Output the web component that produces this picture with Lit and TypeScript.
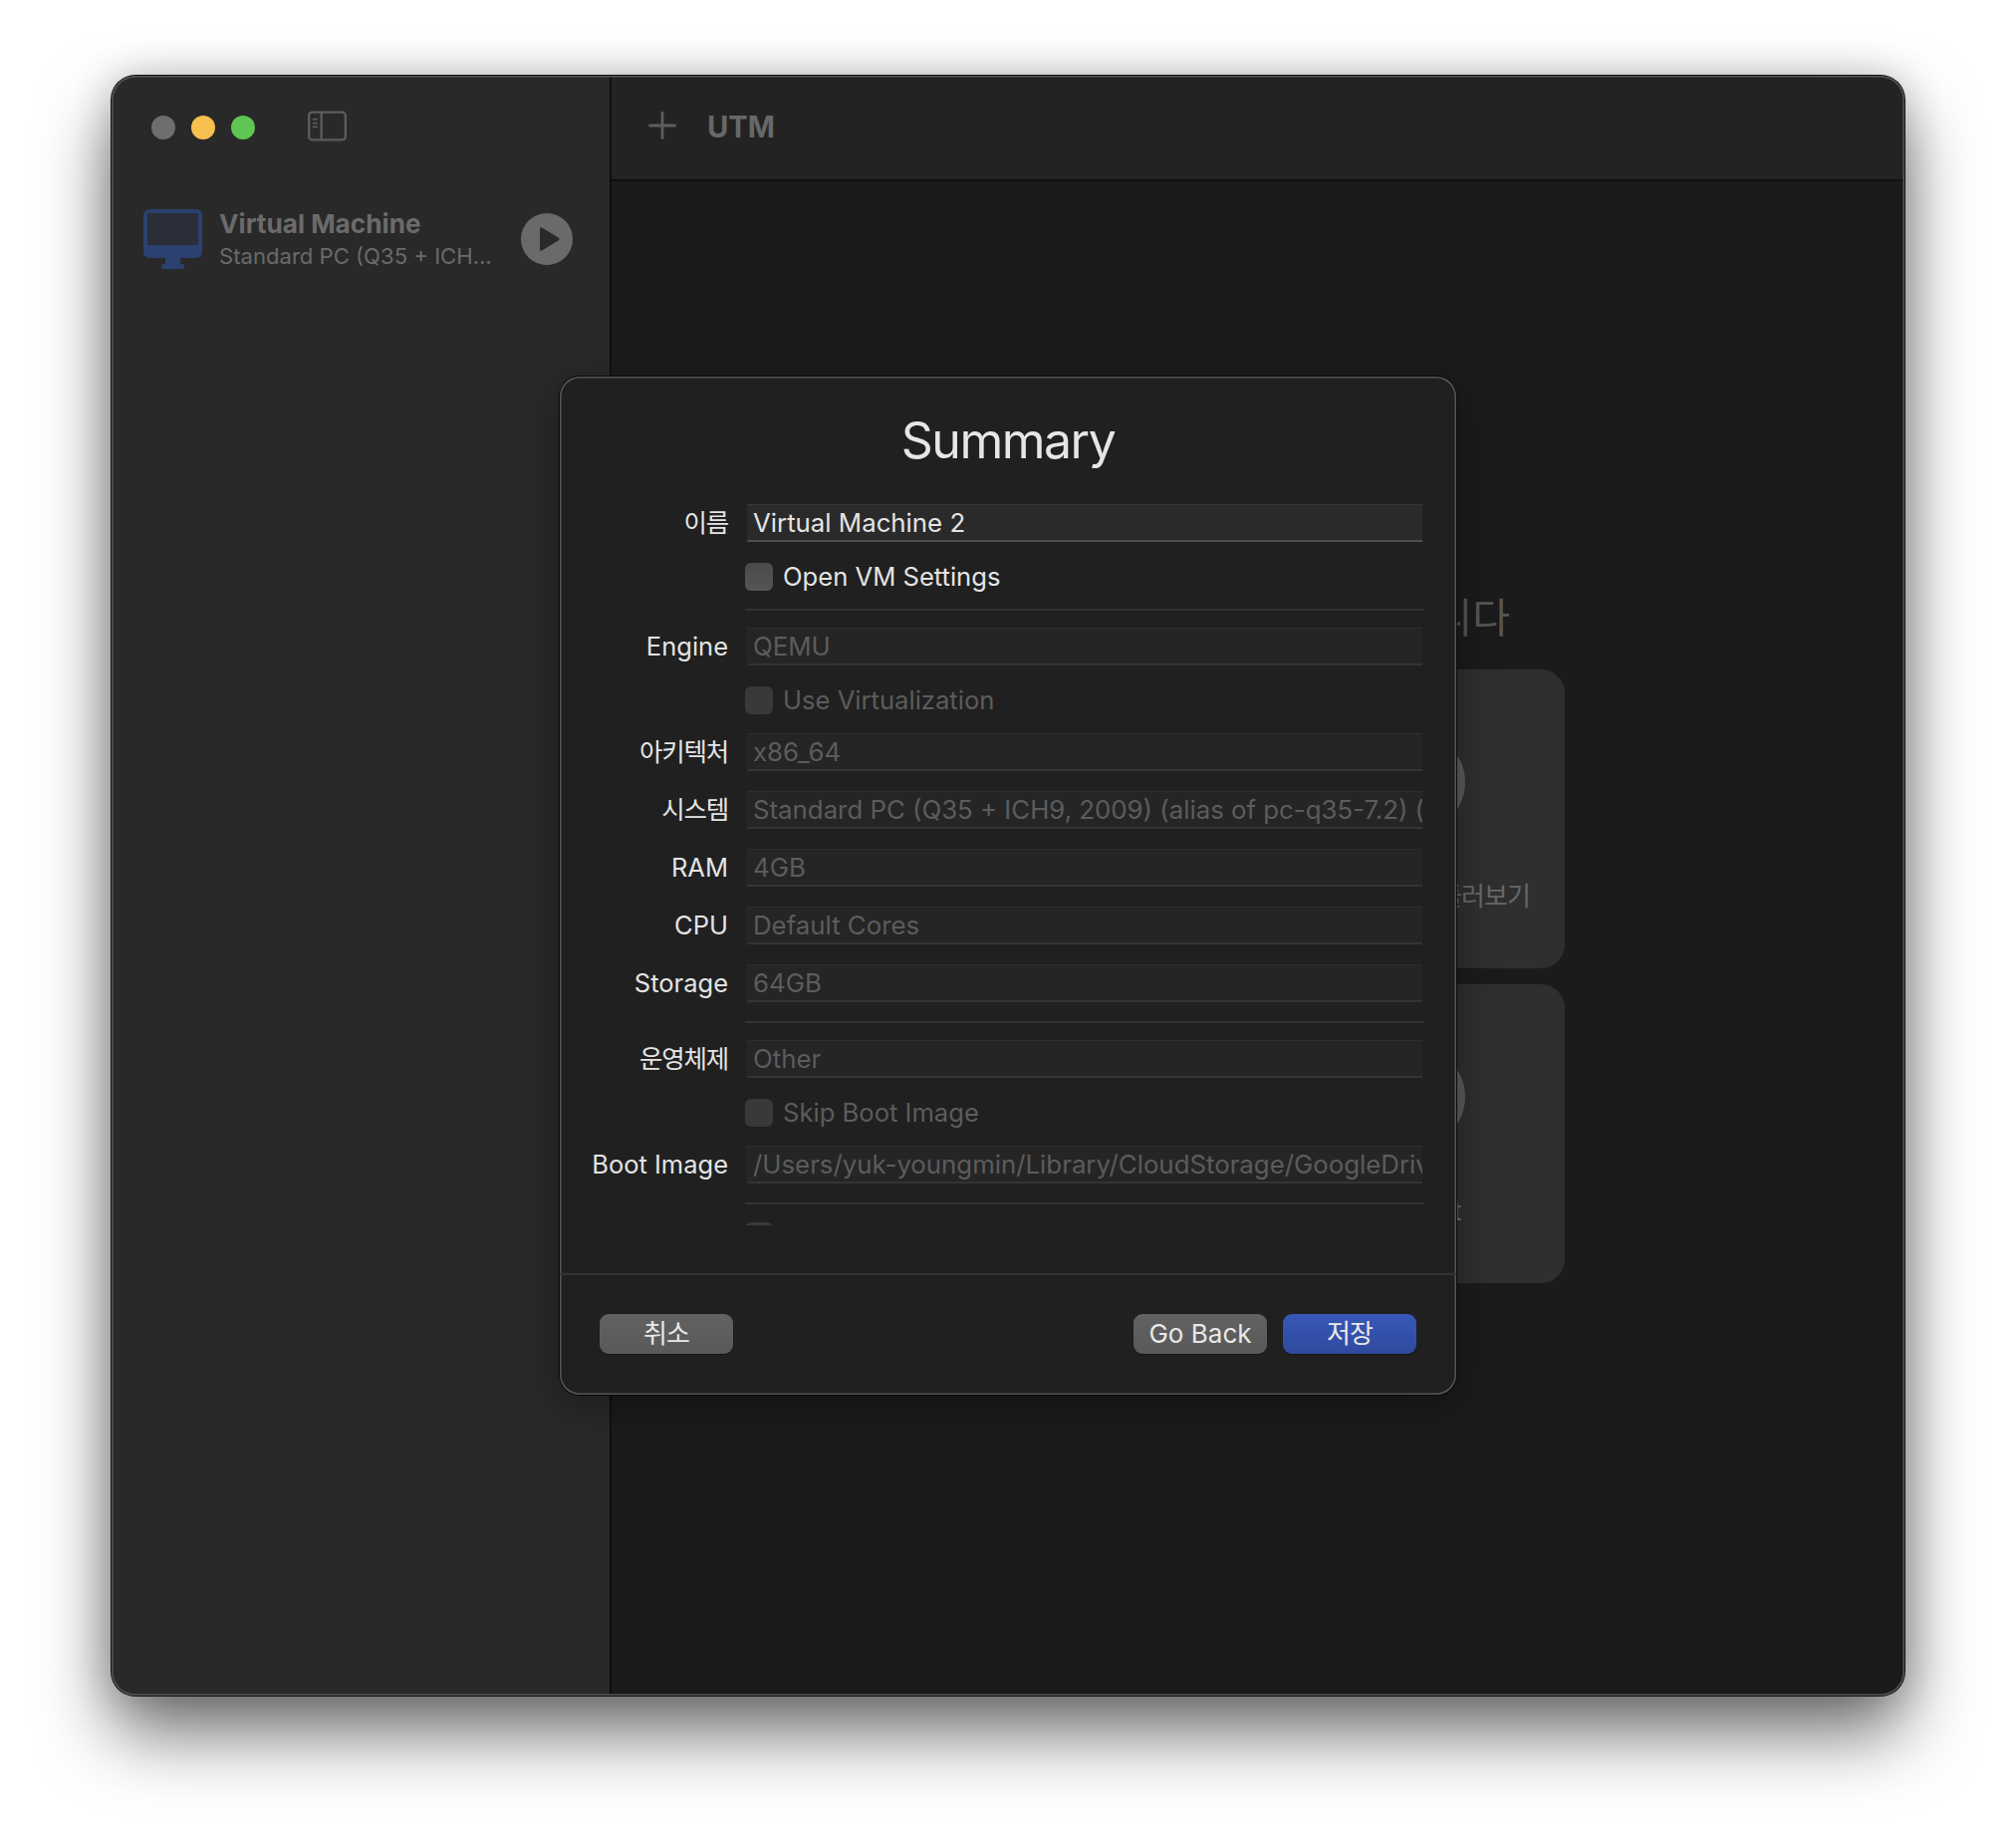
import { LitElement, html, css } from "lit";
import { customElement } from "lit/decorators.js";

type Row =
  | { kind: "field"; label: string; value: string; active?: boolean; ko?: boolean }
  | { kind: "check"; label: string; active?: boolean }
  | { kind: "divider" };

const rows: Row[] = [
  { kind: "field", label: "이름", value: "Virtual Machine 2", active: true, ko: true },
  { kind: "check", label: "Open VM Settings", active: true },
  { kind: "divider" },
  { kind: "field", label: "Engine", value: "QEMU" },
  { kind: "check", label: "Use Virtualization" },
  { kind: "field", label: "아키텍처", value: "x86_64", ko: true },
  { kind: "field", label: "시스템", value: "Standard PC (Q35 + ICH9, 2009) (alias of pc-q35-7.2) (q35)", ko: true },
  { kind: "field", label: "RAM", value: "4GB" },
  { kind: "field", label: "CPU", value: "Default Cores" },
  { kind: "field", label: "Storage", value: "64GB" },
  { kind: "divider" },
  { kind: "field", label: "운영체제", value: "Other", ko: true },
  { kind: "check", label: "Skip Boot Image" },
  { kind: "field", label: "Boot Image", value: "/Users/yuk-youngmin/Library/CloudStorage/GoogleDrive-account/My Drive/image.iso" },
  { kind: "divider" },
  { kind: "check", label: "" },
];

@customElement("app-root")
export class AppRoot extends LitElement {
  static styles = css`
    :host {
      display: block;
      width: 2024px;
      height: 1850px;
      padding: 76px 112px 148px;
      box-sizing: border-box;
      background: #fff;
      font-family: Inter, "Noto Sans CJK KR", sans-serif;
      overflow: hidden;
    }
    .window {
      position: relative;
      display: flex;
      height: 100%;
      border-radius: 24px;
      background: #1b1b1b;
      box-shadow: 0 0 0 1px #111, 0 38px 72px rgba(0, 0, 0, 0.56), 0 0 40px rgba(0, 0, 0, 0.2);
    }
    .window::after {
      content: "";
      position: absolute;
      inset: 0;
      border-radius: 24px;
      box-shadow: inset 0 0 0 1.5px #555;
      pointer-events: none;
    }
    .sidebar {
      flex: 0 0 502px;
      background: #292929;
      border-right: 2px solid #0f0f0f;
      border-radius: 24px 0 0 24px;
      box-sizing: border-box;
    }
    .titlebar {
      display: flex;
      align-items: center;
      height: 79px;
      padding: 25px 0 0 40px;
      box-sizing: border-box;
    }
    .light { width: 24px; height: 24px; border-radius: 50%; margin-right: 16px; }
    .gray { background: #6e6e6e; }
    .yellow { background: #f7c04f; }
    .green { background: #5fc653; }
    .toggle { margin-left: 37px; margin-top: -3px; display: block; }
    .vm {
      display: flex;
      align-items: center;
      margin-top: 55px;
      padding-left: 32px;
      height: 60px;
    }
    .monitor { display: block; flex: none; }
    .vm-text { margin: 2px 0 0 17px; width: 303px; flex: none; }
    .vm-name {
      font-size: 26.2px;
      line-height: 32px;
      font-weight: 700;
      color: #6b6b6b;
      white-space: nowrap;
    }
    .vm-sub {
      font-size: 22.1px;
      line-height: 32px;
      color: #6a6a6a;
      white-space: nowrap;
    }
    .play { display: block; flex: none; }
    .main { flex: 1; display: flex; flex-direction: column; min-width: 0; }
    .toolbar {
      display: flex;
      align-items: center;
      height: 106px;
      flex: none;
      box-sizing: border-box;
      background: #232323;
      border-bottom: 2px solid #0f0f0f;
      border-radius: 0 24px 0 0;
      padding: 0 0 2px 37px;
    }
    .plus { display: block; margin-top: -3px; }
    .toolbar-title {
      margin-left: 31px;
      font-size: 29.2px;
      font-weight: 700;
      color: #686868;
    }
    .welcome {
      flex: 1;
      display: flex;
      flex-direction: column;
      align-items: center;
      justify-content: center;
    }
    .welcome-title {
      font-size: 41px;
      line-height: 48px;
      color: #565656;
      margin-bottom: 28px;
      white-space: nowrap;
    }
    .cards {
      display: grid;
      grid-template-columns: 300px 300px;
      grid-auto-rows: 300px;
      gap: 16px;
    }
    .card {
      display: flex;
      flex-direction: column;
      align-items: center;
      border-radius: 24px;
      background: #2f2f2f;
    }
    .circle {
      width: 100px;
      height: 100px;
      border-radius: 50%;
      background: #5a5a5a;
      margin-top: 63px;
    }
    .card-label {
      margin-top: 48px;
      font-size: 26px;
      line-height: 34px;
      letter-spacing: -1px;
      color: #686868;
      white-space: nowrap;
    }
    .modal {
      position: absolute;
      left: 450px;
      top: 302px;
      width: 900px;
      height: 1022px;
      box-sizing: border-box;
      border-radius: 20px;
      background: #202020;
      box-shadow: inset 0 0 0 1.5px #555, 0 0 0 1px #0a0a0a, 0 10px 40px rgba(0, 0, 0, 0.35);
      display: flex;
      flex-direction: column;
    }
    .modal h2 {
      margin: 0;
      flex: none;
      height: 128px;
      box-sizing: border-box;
      padding-top: 29px;
      font-size: 50px;
      line-height: 70px;
      font-weight: 400;
      letter-spacing: -1.5px;
      text-align: center;
      color: #e6e6e6;
    }
    .form {
      flex: none;
      height: 724px;
      overflow: hidden;
    }
    .row {
      display: grid;
      grid-template-columns: 169px 678px;
      column-gap: 19px;
      align-items: center;
    }
    .form > :first-child { margin-top: 0; }
    .field-row { height: 38px; margin-top: 20px; }
    .check-row { height: 28px; margin-top: 21px; }
    .check-row + .field-row { margin-top: 19px; }
    .check-row + .divider { margin-top: 18px; }
    .divider {
      height: 2px;
      margin: 19px 0 0 186px;
      width: 682px;
      background: #323232;
    }
    .divider + .field-row { margin-top: 17px; }
    .divider + .check-row { margin-top: 18px; }
    .label {
      text-align: right;
      font-size: 25.5px;
      line-height: 34px;
      color: #e4e4e4;
      white-space: nowrap;
    }
    .label.ko { letter-spacing: -1.2px; }
    .field {
      height: 38px;
      box-sizing: border-box;
      padding-left: 5px;
      background: #252525;
      border-top: 1px solid #2e2e2e;
      border-bottom: 2px solid #343434;
      border-left: 1px solid #2a2a2a;
      font-size: 25.8px;
      line-height: 35px;
      color: #5c5c5c;
      white-space: nowrap;
      overflow: hidden;
    }
    .field.active {
      background: #2a2a2a;
      border-top-color: #363636;
      border-bottom-color: #505050;
      color: #e4e4e4;
    }
    .check {
      grid-column: 2;
      display: flex;
      align-items: center;
      margin-left: -2px;
      font-size: 25.6px;
      line-height: 28px;
      color: #5c5c5c;
      white-space: nowrap;
    }
    .check.active { color: #e4e4e4; }
    .box {
      flex: none;
      width: 28px;
      height: 28px;
      box-sizing: border-box;
      border-radius: 6px;
      margin-right: 10px;
      background: #393939;
    }
    .check.active .box { background: linear-gradient(#4a4a4a, #555); }
    .footer {
      flex: none;
      display: flex;
      align-items: center;
      box-sizing: border-box;
      height: 123px;
      margin-top: 48px;
      border-top: 2px solid #333;
      padding: 0 40px 4px 40px;
    }
    .btn {
      width: 134px;
      height: 40px;
      border: none;
      border-radius: 9px;
      padding: 0;
      font: inherit;
      font-size: 26px;
      line-height: 38px;
      color: #e8e8e8;
      background: linear-gradient(#626262, #595959);
      box-shadow: 0 1px 1px rgba(0, 0, 0, 0.4);
    }
    .btn.ko { letter-spacing: -1px; }
    .spacer { flex: 1; }
    .btn.primary {
      margin-left: 16px;
      background: linear-gradient(#3758b8, #2f4a9e);
    }
  `;

  private renderRow(r: Row) {
    if (r.kind === "divider") return html`<div class="divider"></div>`;
    if (r.kind === "check") {
      return html`<div class="row check-row">
        <div class="check ${r.active ? "active" : ""}"><span class="box"></span>${r.label}</div>
      </div>`;
    }
    return html`<div class="row field-row">
      <div class="label ${r.ko ? "ko" : ""}">${r.label}</div>
      <div class="field ${r.active ? "active" : ""}">${r.value}</div>
    </div>`;
  }

  render() {
    return html`
      <div class="window">
        <aside class="sidebar">
          <div class="titlebar">
            <span class="light gray"></span>
            <span class="light yellow"></span>
            <span class="light green"></span>
            <svg class="toggle" width="39" height="31" viewBox="0 0 40 31" fill="none" stroke="#5c5c5c" stroke-width="2.4">
              <rect x="1.2" y="1.2" width="37.6" height="28.6" rx="3.5" />
              <path d="M14 1.2V29.8" />
              <path d="M5 8.5H10M5 12.5H10M5 16.5H10" stroke-width="1.8" />
            </svg>
          </div>
          <div class="vm">
            <svg class="monitor" width="59" height="60" viewBox="0 0 59 60">
              <rect x="0" y="0" width="59" height="49" rx="6" fill="#2c4170" />
              <rect x="4" y="4" width="51" height="32" fill="#2a2e38" />
              <path d="M22 49H37V55H40Q41 55 41 57V58Q41 60 39 60H20Q18 60 18 58V57Q18 55 20 55H22Z" fill="#2c4170" />
            </svg>
            <div class="vm-text">
              <div class="vm-name">Virtual Machine</div>
              <div class="vm-sub">Standard PC (Q35 + ICH...</div>
            </div>
            <svg class="play" width="52" height="52" viewBox="0 0 52 52">
              <circle cx="26" cy="26" r="26" fill="#6a6a6a" />
              <path d="M19 15.5Q19 13.5 21 14.6L37.5 24.4Q39.5 26 37.5 27.6L21 37.4Q19 38.5 19 36.5Z" fill="#292929" />
            </svg>
          </div>
        </aside>
        <section class="main">
          <header class="toolbar">
            <svg class="plus" width="28" height="28" viewBox="0 0 28 28" stroke="#5e5e5e" stroke-width="2.8" stroke-linecap="round">
              <path d="M14 1.5V26.5M1.5 14H26.5" />
            </svg>
            <div class="toolbar-title">UTM</div>
          </header>
          <div class="welcome">
            <div class="welcome-title">UTM에 오신 것을 환영합니다</div>
            <div class="cards">
              <div class="card"><div class="circle"></div><div class="card-label">새 가상머신 만들기</div></div>
              <div class="card"><div class="circle"></div><div class="card-label">UTM 갤러리 둘러보기</div></div>
              <div class="card"><div class="circle"></div><div class="card-label">기존 가상머신 열기</div></div>
              <div class="card"><div class="circle"></div><div class="card-label">Support</div></div>
            </div>
          </div>
        </section>
        <div class="modal">
          <h2>Summary</h2>
          <div class="form">${rows.map((r) => this.renderRow(r))}</div>
          <div class="footer">
            <button class="btn ko">취소</button>
            <span class="spacer"></span>
            <button class="btn">Go Back</button>
            <button class="btn primary ko">저장</button>
          </div>
        </div>
      </div>
    `;
  }
}
